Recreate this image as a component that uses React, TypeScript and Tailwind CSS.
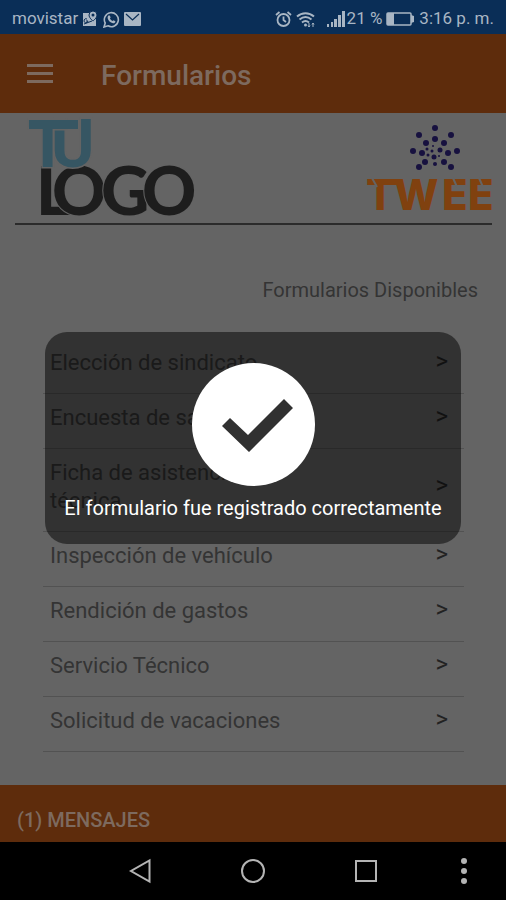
import { useState } from "react";

interface FormItem {
  id: number;
  name: string;
}

const forms: FormItem[] = [
  { id: 1, name: "Elección de sindicato" },
  { id: 2, name: "Encuesta de satisfacción" },
  { id: 3, name: "Ficha de asistencia técnica" },
  { id: 4, name: "Inspección de vehículo" },
  { id: 5, name: "Rendición de gastos" },
  { id: 6, name: "Servicio Técnico" },
  { id: 7, name: "Solicitud de vacaciones" },
];

// Dots of the TWEE mark: x, y, radius
const dots = [
  [73, 4, 3], [57, 11, 3], [89, 11, 3], [51, 27, 3], [95, 27, 3], [57, 43, 3], [89, 43, 3],
  [73, 15, 3], [64, 19, 3], [82, 19, 3], [60, 29, 3], [86, 29, 3], [63, 38, 3], [82, 38, 3],
  [78, 26, 2.5], [72, 33, 2.5], [73, 40, 2], [65, 25, 1.5], [70, 27, 1.5], [66, 31, 1.5], [71, 22, 1], [77, 32, 1],
];

function StatusBar() {
  return (
    <div className="flex h-[34px] items-center justify-between bg-[#0a2e57] px-3 pt-1 text-[17px] text-[#a9b6c4]">
      <div className="flex items-center gap-1">
        <span>movistar</span>
        <svg width="15" height="16" viewBox="0 0 15 16" aria-hidden="true">
          <path d="M1 2h6c0 4 2 6 4 8l3-3v8H1z" fill="currentColor" />
          <path d="M11 0a4 4 0 0 1 4 4c0 3-4 6-4 6S7 7 7 4a4 4 0 0 1 4-4z" fill="currentColor" stroke="#0a2e57" />
          <circle cx="11" cy="4" r="1.5" fill="#0a2e57" />
          <path d="M2 13l8-3M5 8a2 2 0 1 0 1 2H4" fill="none" stroke="#0a2e57" />
        </svg>
        <svg className="ml-0.5" width="17" height="17" viewBox="0 0 17 17" aria-hidden="true">
          <path d="M1 16l1.2-4A7 7 0 1 1 5 14.8z" fill="none" stroke="currentColor" strokeWidth="1.6" />
          <path
            d="M5.5 4.5l1.3.1.8 1.8-.7 1c.6 1.2 1.5 2 2.6 2.6l1-.8 1.9 1c0 1.5-1.3 2.2-2.4 2-2.8-.6-4.7-2.7-5.3-5-.2-1.1.1-2 .8-2.7z"
            fill="currentColor"
          />
        </svg>
        <svg width="17" height="14" viewBox="0 0 17 14" aria-hidden="true">
          <rect width="17" height="14" rx="1" fill="currentColor" />
          <path d="M2 2l6.5 6L15 2" fill="none" stroke="#0a2e57" strokeWidth="1.2" />
        </svg>
      </div>
      <div className="flex items-center">
        <svg width="17" height="17" viewBox="0 0 17 17" fill="none" stroke="currentColor" strokeWidth="1.8" aria-hidden="true">
          <circle cx="8.5" cy="9" r="6" />
          <path d="M8.5 5.5V9l2.5 2M1 4l3.5-3M16 4l-3.5-3" />
        </svg>
        <svg className="ml-1" width="19" height="17" viewBox="0 0 19 17" fill="none" stroke="currentColor" strokeWidth="2" aria-hidden="true">
          <path d="M1 5.5c5-4.5 12-4.5 17 0M3.5 8.5c4-3.3 8-3.3 12 0M6 11.5c2.3-1.9 4.7-1.9 7 0" />
          <circle cx="9.5" cy="14" r="1.5" fill="currentColor" stroke="none" />
          <path d="M13 12v4M12 14.5l1 1.5 1-1.5M17 16v-4M16 13.5l1-1.5 1 1.5" strokeWidth="1" />
        </svg>
        <svg className="ml-3" width="18" height="16" viewBox="0 0 18 16" fill="currentColor" aria-hidden="true">
          <rect x="0" y="13" width="2" height="3" />
          <rect x="4" y="11" width="2" height="5" />
          <rect x="7" y="8" width="3" height="8" />
          <rect x="11" y="4" width="3" height="12" />
          <rect x="15" y="0" width="3" height="16" />
        </svg>
        <span className="ml-0.5">21 %</span>
        <svg className="mx-1" width="29" height="16" viewBox="0 0 29 16" aria-hidden="true">
          <rect x="1" y="2" width="24" height="12" rx="1" fill="none" stroke="currentColor" strokeWidth="1.5" />
          <rect x="1" y="2" width="7" height="12" fill="currentColor" />
          <path d="M25 4l3 1v6l-3 1z" fill="currentColor" />
        </svg>
        <span>3:16 p. m.</span>
      </div>
    </div>
  );
}

function CompanyLogo() {
  return (
    <svg
      width="170"
      height="102"
      viewBox="0 0 170 102"
      role="img"
      aria-label="Tu Logo"
      className="overflow-visible font-['Lato','Open_Sans',sans-serif] font-black"
      stroke="#646464"
      strokeWidth="2"
      paintOrder="stroke"
    >
      <g fill="#1d1d1d" fontSize="67">
        <text x="9" y="98">L</text>
        <text x="25" y="98">O</text>
        <text x="74" y="98">G</text>
        <text x="115" y="98">O</text>
      </g>
      <g fill="#365663" strokeWidth="3">
        <text x="24" y="50" fontSize="66" className="font-['Roboto',sans-serif] font-bold">U</text>
        <rect x="2" y="3" width="49" height="9" />
        <text x="1" y="50" fontSize="65">T</text>
        <rect x="2" y="3" width="49" height="9" stroke="none" />
      </g>
    </svg>
  );
}

function TweeLogo() {
  return (
    <svg
      width="130"
      height="90"
      viewBox="0 0 130 90"
      role="img"
      aria-label="Twee"
      className="overflow-visible font-['Inter',sans-serif] font-extrabold"
    >
      {dots.map(([x, y, r], i) => (
        <circle key={i} cx={x} cy={y} r={r} fill="#17113f" />
      ))}
      <g fill="#80410f" fontSize="42">
        <text x="4" y="86">T</text>
        <text x="32" y="86">W</text>
        <text x="80" y="86">E</text>
        <text x="106" y="86">E</text>
      </g>
      <rect x="28" y="55" width="10" height="6" fill="#80410f" />
      <path d="M10 54l5 9M91 54l4 9M117 54l4 9" stroke="#646464" strokeWidth="2" />
    </svg>
  );
}

function FormRow({ item }: { item: FormItem }) {
  return (
    <li className="border-b border-[#525252]">
      <button type="button" className="flex w-full items-center justify-between pt-2.5 pr-4 pb-4 pl-[7px] text-left">
        <span className="max-w-[255px] text-[22px] leading-7">{item.name}</span>
        <span className="-mt-1 text-2xl leading-6 text-[#222222]">&gt;</span>
      </button>
    </li>
  );
}

function SuccessDialog({ message, onClose }: { message: string; onClose: () => void }) {
  return (
    <div className="absolute inset-0 flex items-center justify-center px-[45px]" onClick={onClose}>
      <div role="dialog" aria-label={message} className="flex w-full flex-col items-center rounded-[22px] bg-black/50 pt-[31px] pb-[22px]">
        <svg width="123" height="123" viewBox="0 0 123 123" aria-hidden="true">
          <circle cx="61.5" cy="61.5" r="61.5" fill="#fff" />
          <path d="M30 63l8-8 18 17 36-36 9 9-44 44z" fill="#313131" />
        </svg>
        <p className="mt-2 text-xl leading-7 text-white">{message}</p>
      </div>
    </div>
  );
}

function NavBar() {
  return (
    <nav className="flex h-[58px] items-center justify-end bg-black pr-8 text-[#b4b4b4]">
      <button type="button" aria-label="Atrás" className="mr-[88px]">
        <svg width="24" height="26" viewBox="0 0 24 26" fill="none" stroke="currentColor" strokeWidth="2">
          <path d="M21.5 2.5v21L3 13z" />
        </svg>
      </button>
      <button type="button" aria-label="Inicio" className="mr-[88px]">
        <svg width="26" height="26" viewBox="0 0 26 26" fill="none" stroke="currentColor" strokeWidth="2">
          <circle cx="13" cy="13" r="11" />
        </svg>
      </button>
      <button type="button" aria-label="Recientes" className="mr-19">
        <svg width="24" height="24" viewBox="0 0 24 24" fill="none" stroke="currentColor" strokeWidth="2">
          <rect x="2" y="2" width="20" height="20" />
        </svg>
      </button>
      <button type="button" aria-label="Más opciones">
        <svg width="20" height="28" viewBox="0 0 20 28" fill="currentColor">
          <circle cx="10" cy="4" r="3" />
          <circle cx="10" cy="14" r="3" />
          <circle cx="10" cy="24" r="3" />
        </svg>
      </button>
    </nav>
  );
}

export default function App() {
  const [showDialog, setShowDialog] = useState(true);

  return (
    <div className="flex min-h-screen flex-col bg-[#646464] font-['Roboto','Noto_Sans',sans-serif] text-[#343434]">
      <StatusBar />
      <div className="relative flex flex-1 flex-col">
        <header className="flex h-[79px] items-center bg-[#5e2c0c] pl-[27px] text-[#7d6a5f]">
          <button type="button" aria-label="Menú">
            <svg width="26" height="20" viewBox="0 0 26 20" fill="currentColor">
              <rect y="0" width="26" height="3" />
              <rect y="8" width="26" height="3" />
              <rect y="16" width="26" height="3" />
            </svg>
          </button>
          <h1 className="ml-12 pt-1 text-[28px] leading-8 font-medium">Formularios</h1>
        </header>

        <main className="flex-1 pr-3.5 pl-[15px]">
          <div className="flex h-28 items-start justify-between border-b-2 border-[#2b2b2b] pt-1 pl-3">
            <CompanyLogo />
            <div className="pt-[7px]">
              <TweeLogo />
            </div>
          </div>
          <h2 className="mt-[51px] mr-3.5 text-right text-xl leading-7">Formularios Disponibles</h2>
          <ul className="mt-[35px] mr-7 ml-7">
            {forms.map((item) => (
              <FormRow key={item.id} item={item} />
            ))}
          </ul>
        </main>

        <footer className="flex h-[57px] items-center bg-[#5e2c0c] pt-3 pl-[17px]">
          <button type="button" className="text-xl font-medium text-[#7d6a5f]">
            (1) MENSAJES
          </button>
        </footer>

        {showDialog && (
          <SuccessDialog message="El formulario fue registrado correctamente" onClose={() => setShowDialog(false)} />
        )}
      </div>
      <NavBar />
    </div>
  );
}
